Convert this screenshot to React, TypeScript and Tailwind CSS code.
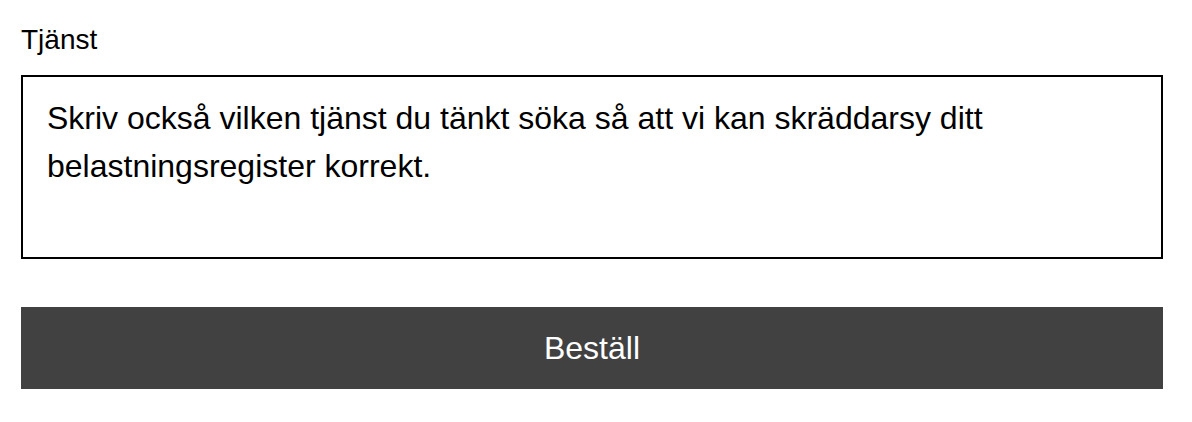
import React from "react";

export default function App() {
  return (
    <div className="w-[1192px] h-[422px] bg-white pl-[21px] pr-[29px] pt-[22px] text-black" style={{ fontFamily: '"Liberation Sans", Arial, sans-serif' }}>
      <label className="block text-[28px] leading-[36px] mb-[17px]">Tjänst</label>
      <div className="h-[184px] border-2 border-black px-[24px] py-[17px] text-[32px] leading-[48px]">
        Skriv också vilken tjänst du tänkt söka så att vi kan skräddarsy ditt belastningsregister korrekt.
      </div>
      <button className="mt-[48px] w-full h-[82px] bg-[#414141] text-white text-[32px]">Beställ</button>
    </div>
  );
}
